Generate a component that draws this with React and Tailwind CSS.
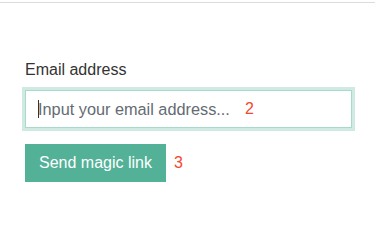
export default function App() {
  return (
    <div className="min-h-[238px] bg-white font-['Liberation_Sans',Arial,sans-serif] text-base">
      <div className="h-[3px] border-b border-[#dcdcdc]" />
      <form className="px-[25px] pt-[55px]" onSubmit={(e) => e.preventDefault()}>
        <label className="block leading-6 text-[#333]">Email address</label>
        <div className="relative mt-2 w-[327px]">
          <input
            type="email"
            placeholder="Input your email address..."
            className="h-[38px] w-full border border-[#a9d9c9] bg-white px-3 text-[16.3px] text-[#555] outline-none ring-[3px] ring-[#cfeae2] placeholder:text-[#646b72]"
          />
          <span className="pointer-events-none absolute left-[13px] top-[10px] h-[18px] w-px bg-[#333]" />
          <span className="pointer-events-none absolute left-[220px] top-[7px] leading-6 text-[#f2482f]">2</span>
        </div>
        <div className="mt-4 flex items-center gap-2">
          <button type="submit" className="h-[38px] bg-[#52b197] px-[14px] text-white">
            Send magic link
          </button>
          <span className="text-[#f2482f]">3</span>
        </div>
      </form>
    </div>
  );
}
